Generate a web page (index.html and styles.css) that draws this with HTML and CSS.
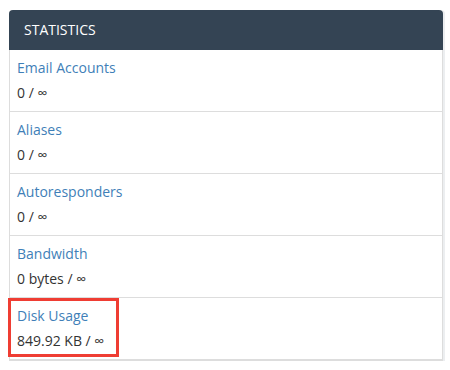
FILE: index.html
```html
<!DOCTYPE html>
<html lang="en">
<head>
    <meta charset="UTF-8">
    <title>Statistics</title>
    <link rel="stylesheet" href="styles.css">
</head>
<body>
    <div class="panel">
        <div class="panel-heading">STATISTICS</div>
        <div class="stat">
            <a class="stat-label" href="#">Email Accounts</a>
            <div class="stat-value">0 / &infin;</div>
        </div>
        <div class="stat">
            <a class="stat-label" href="#">Aliases</a>
            <div class="stat-value">0 / &infin;</div>
        </div>
        <div class="stat">
            <a class="stat-label" href="#">Autoresponders</a>
            <div class="stat-value">0 / &infin;</div>
        </div>
        <div class="stat">
            <a class="stat-label" href="#">Bandwidth</a>
            <div class="stat-value">0 bytes / &infin;</div>
        </div>
        <div class="stat">
            <a class="stat-label" href="#">Disk Usage</a>
            <div class="stat-value">849.92 KB / &infin;</div>
            <span class="highlight"></span>
        </div>
    </div>
</body>
</html>
```
FILE: styles.css
```css
body {
    font-family: "Open Sans", Arial, sans-serif;
    font-size: 14px;
    color: #333;
    margin: 0;
    padding: 10px 7px 0 9px;
    background: #fff;
}

.panel {
    border: 1px solid #ddd;
    border-top: none;
    border-radius: 4px 4px 0 0;
    box-shadow: 2px 0 0 #eceef0;
}

.panel-heading {
    background-color: #344454;
    color: #fff;
    height: 40px;
    line-height: 40px;
    padding: 0 15px;
    border-radius: 4px 4px 0 0;
    margin: 0 -1px;
}

.stat {
    position: relative;
    padding: 6px 7px;
    border-bottom: 1px solid #ddd;
}

.stat-label {
    display: block;
    line-height: 24px;
    color: #3f7fb8;
    text-decoration: none;
}

.stat-value {
    line-height: 24px;
    margin-top: 1px;
}

.highlight {
    position: absolute;
    left: -2px;
    top: 0;
    width: 105px;
    height: 53px;
    border: 3px solid #ef3d33;
}
```
